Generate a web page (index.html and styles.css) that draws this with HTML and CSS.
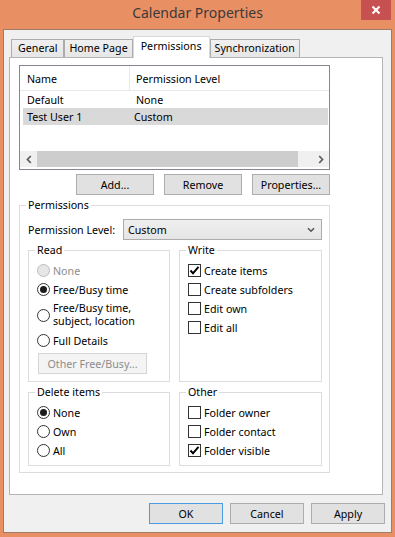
FILE: index.html
```html
<!DOCTYPE html>
<html lang="en">
<head>
  <meta charset="UTF-8">
  <title>Calendar Properties</title>
  <link rel="stylesheet" href="styles.css">
</head>
<body>

  <div class="window">
    <!-- Title bar -->
    <div class="titlebar">
      <span class="title">Calendar Properties</span>
      <button class="close-btn" aria-label="Close">
        <svg width="10" height="10" viewBox="0 0 10 10"><path d="M1.5 1.5 L8.5 8.5 M8.5 1.5 L1.5 8.5" stroke="#fff" stroke-width="2" fill="none"/></svg>
      </button>
    </div>

    <div class="dialog">
      <div class="tabs">
        <div class="tab">General</div>
        <div class="tab">Home Page</div>
        <div class="tab active">Permissions</div>
        <div class="tab">Synchronization</div>
      </div>

      <div class="tab-panel">

        <!-- Users list -->
        <div class="perm-list">
          <div class="list-header">
            <div class="col-name">Name</div>
            <div class="col-level">Permission Level</div>
          </div>
          <div class="list-row">
            <span class="col-name">Default</span>
            <span class="col-level">None</span>
          </div>
          <div class="list-row selected">
            <span class="col-name">Test User 1</span>
            <span class="col-level">Custom</span>
          </div>
          <div class="list-fill"></div>
          <div class="hscroll">
            <span class="scroll-arrow">
              <svg width="6" height="9" viewBox="0 0 6 9"><path d="M4.8 1 L1.5 4.5 L4.8 8" stroke="#606060" stroke-width="1.8" fill="none"/></svg>
            </span>
            <span class="scroll-thumb"></span>
            <span class="scroll-track"></span>
            <span class="scroll-arrow">
              <svg width="6" height="9" viewBox="0 0 6 9"><path d="M1.2 1 L4.5 4.5 L1.2 8" stroke="#606060" stroke-width="1.8" fill="none"/></svg>
            </span>
          </div>
        </div>

        <div class="list-actions">
          <button class="btn">Add...</button>
          <button class="btn">Remove</button>
          <button class="btn">Properties...</button>
        </div>

        <!-- Permissions -->
        <fieldset class="group perm-group">
          <legend>Permissions</legend>

          <div class="level-row">
            <span>Permission Level:</span>
            <div class="select">
              <span>Custom</span>
              <svg width="8" height="6" viewBox="0 0 8 6"><path d="M1 1.2 L4 4.2 L7 1.2" stroke="#555" stroke-width="1.6" fill="none"/></svg>
            </div>
          </div>

          <div class="group-row">
            <fieldset class="group sub-group read-group">
              <legend>Read</legend>
              <label class="option disabled"><span class="radio"></span>None</label>
              <label class="option"><span class="radio checked"></span>Free/Busy time</label>
              <label class="option two-line"><span class="radio"></span><span>Free/Busy time,<br>subject, location</span></label>
              <label class="option"><span class="radio"></span>Full Details</label>
              <button class="btn btn-disabled other-btn">Other Free/Busy...</button>
            </fieldset>

            <fieldset class="group sub-group write-group">
              <legend>Write</legend>
              <label class="option"><span class="check checked"><svg width="11" height="11" viewBox="0 0 11 11"><path d="M1.5 5.5 L4 8.3 L9.5 1.8" stroke="#000" stroke-width="2" fill="none"/></svg></span>Create items</label>
              <label class="option"><span class="check"></span>Create subfolders</label>
              <label class="option"><span class="check"></span>Edit own</label>
              <label class="option"><span class="check"></span>Edit all</label>
            </fieldset>
          </div>

          <div class="group-row">
            <fieldset class="group sub-group small-group">
              <legend>Delete items</legend>
              <label class="option"><span class="radio checked"></span>None</label>
              <label class="option"><span class="radio"></span>Own</label>
              <label class="option"><span class="radio"></span>All</label>
            </fieldset>

            <fieldset class="group sub-group small-group write-group">
              <legend>Other</legend>
              <label class="option"><span class="check"></span>Folder owner</label>
              <label class="option"><span class="check"></span>Folder contact</label>
              <label class="option"><span class="check checked"><svg width="11" height="11" viewBox="0 0 11 11"><path d="M1.5 5.5 L4 8.3 L9.5 1.8" stroke="#000" stroke-width="2" fill="none"/></svg></span>Folder visible</label>
            </fieldset>
          </div>
        </fieldset>

      </div>

      <div class="dialog-actions">
        <button class="btn btn-small btn-default">OK</button>
        <button class="btn btn-small">Cancel</button>
        <button class="btn btn-small">Apply</button>
      </div>
    </div>
  </div>

</body>
</html>
```

FILE: styles.css
```css
* {
  box-sizing: border-box;
}

body {
  margin: 0;
  background-color: #e98f64;
  font-family: "Noto Sans", "Segoe UI", sans-serif;
  font-size: 10.7px;
  color: #000;
}

.window {
  width: 395px;
  height: 537px;
  overflow: hidden;
}

/* Title bar */
.titlebar {
  position: relative;
  height: 29px;
  text-align: center;
}

.title {
  font-size: 14px;
  line-height: 26px;
  color: #3a3a3a;
}

.close-btn {
  position: absolute;
  top: 0;
  right: 4px;
  width: 30px;
  height: 20px;
  border: none;
  padding: 0;
  background-color: #c75050;
  display: flex;
  align-items: center;
  justify-content: center;
}

/* Dialog body */
.dialog {
  margin-left: 3px;
  width: 389px;
  height: 504px;
  border: 1px solid #a07b68;
  background-color: #f0f0f0;
  padding: 6px 6px 0 5px;
}

.tabs {
  display: flex;
  align-items: flex-end;
  height: 21px;
  margin-left: 2px;
}

.tab {
  height: 18px;
  padding: 0 4px;
  border: 1px solid #acacac;
  border-bottom: none;
  background: linear-gradient(#f0f0f0, #e6e6e6);
  line-height: 16px;
  white-space: nowrap;
}

.tab:first-child {
  padding: 0 6px;
}

.tab.active {
  position: relative;
  z-index: 1;
  height: 22px;
  margin-bottom: -1px;
  padding: 0 7px;
  background: #fff;
  border-color: #d9d9d9;
  line-height: 18px;
}

.tab-panel {
  width: 374px;
  height: 438px;
  border: 1px solid #b4b4b4;
  background-color: #fff;
  padding: 7px 9px 0;
}

/* List */
.perm-list {
  width: 311px;
  height: 105px;
  border: 1px solid #828790;
  display: flex;
  flex-direction: column;
}

.list-header {
  display: flex;
  height: 25px;
  border-bottom: 1px solid #e8e8e8;
  align-items: center;
  padding-top: 2px;
}

.list-header .col-name {
  width: 110px;
  padding-left: 7px;
  align-self: stretch;
  display: flex;
  align-items: center;
  border-right: 1px solid #e8e8e8;
  margin-top: -2px;
  padding-top: 2px;
}

.list-header .col-level {
  padding-left: 6px;
}

.list-row {
  display: flex;
  align-items: center;
  height: 17px;
  margin: 0 1px 0 3px;
}

.list-row .col-name {
  width: 107px;
  padding-left: 4px;
}

.list-row .col-level {
  padding-left: 6px;
}

.list-row.selected {
  background-color: #d9d9d9;
}

.list-row.selected .col-level {
  padding-left: 4px;
}

.list-fill {
  flex: 1;
}

.hscroll {
  display: flex;
  height: 16px;
  margin-bottom: 2px;
  background-color: #f0f0f0;
}

.scroll-arrow {
  width: 17px;
  display: flex;
  align-items: center;
  justify-content: center;
}

.scroll-thumb {
  width: 261px;
  background-color: #cdcdcd;
}

.scroll-track {
  flex: 1;
}

/* Buttons */
.btn {
  width: 78px;
  height: 21px;
  padding: 0;
  border: 1px solid #adadad;
  background-color: #e1e1e1;
  font: inherit;
  color: #000;
}

.btn-disabled {
  color: #8d8d8d;
  background-color: #f4f4f4;
  border-color: #d5d5d5;
}

.btn-default {
  border-color: #4a9be0;
}

.list-actions {
  display: flex;
  justify-content: flex-end;
  gap: 10px;
  width: 311px;
  margin-top: 4px;
}

/* Group boxes */
.group {
  margin: 0;
  min-width: 0;
  border: 1px solid #dcdcdc;
  padding: 0 7px 6px 8px;
}

.group legend {
  padding: 0 2px;
  margin-left: -2px;
  line-height: 14px;
}

.perm-group {
  width: 311px;
  margin-top: 3px;
}

.level-row {
  display: flex;
  align-items: center;
  margin-top: 7px;
}

.select {
  margin-left: auto;
  width: 199px;
  height: 21px;
  border: 1px solid #acacac;
  background: linear-gradient(#efefef, #e5e5e5);
  display: flex;
  align-items: center;
  justify-content: space-between;
  padding: 0 6px 0 4px;
}

.group-row {
  display: flex;
  gap: 9px;
  margin-top: 3px;
}

.sub-group {
  padding: 4px 6px 0 8px;
  height: 139px;
}

.read-group {
  width: 142px;
  flex: none;
}

.write-group {
  flex: 1;
}

.small-group {
  height: 81px;
  width: 142px;
  flex: none;
}

.small-group.write-group {
  flex: 1;
}

.option {
  display: flex;
  align-items: center;
  gap: 3px;
  height: 19px;
  white-space: nowrap;
}

.option.two-line {
  height: 32px;
  line-height: 13px;
}

.option.disabled {
  color: #8d8d8d;
}

.radio {
  flex: none;
  width: 13px;
  height: 13px;
  border: 1px solid #333;
  border-radius: 50%;
  background-color: #fff;
  display: flex;
  align-items: center;
  justify-content: center;
}

.radio.checked::after {
  content: "";
  width: 7px;
  height: 7px;
  border-radius: 50%;
  background-color: #1c1c1c;
}

.option.disabled .radio {
  border-color: #bcbcbc;
  background-color: #e6e6e6;
}

.check {
  flex: none;
  width: 13px;
  height: 13px;
  border: 1px solid #333;
  background-color: #fff;
  display: flex;
}

.other-btn {
  width: 109px;
  margin: 3px 0 0 1px;
}

/* Bottom buttons */
.dialog-actions {
  display: flex;
  justify-content: flex-end;
  gap: 7px;
  margin-top: 8px;
}

.btn-small {
  width: 74px;
}
```
